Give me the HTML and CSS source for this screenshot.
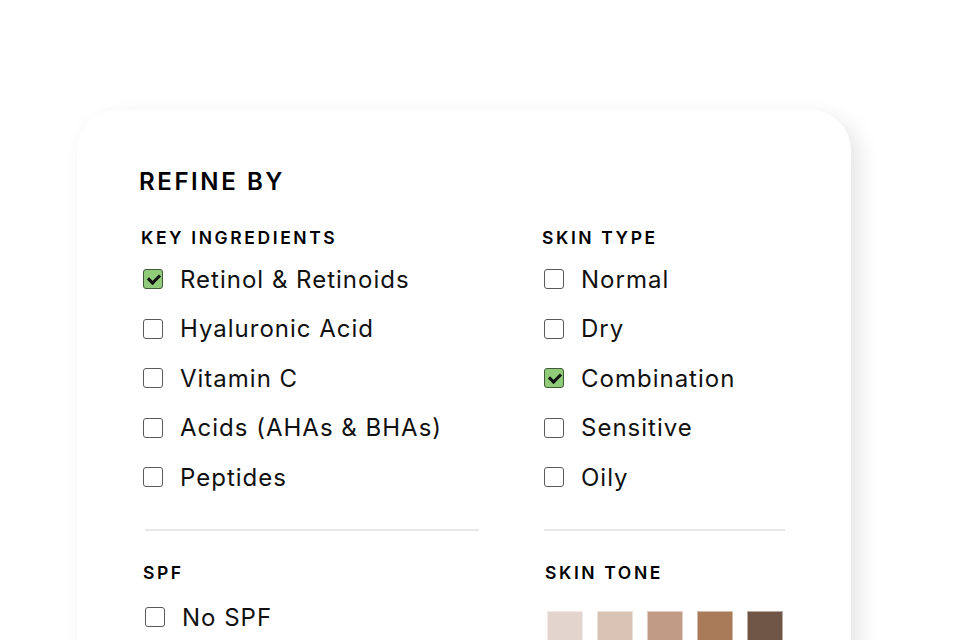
FILE: index.html
```html
<!DOCTYPE html>
<html>
    <head>
        <meta charset="utf-8">
        <title>Refine by</title>
        <link rel="stylesheet" href="styles.css">
    </head>
    <body>
        <div class="page">
            <div class="card">
                <h2 class="title">REFINE BY</h2>
                <div class="grid">
                    <div class="group">
                        <h4 class="group-title">KEY INGREDIENTS</h4>
                        <label class="option"><span class="box checked"></span>Retinol &amp; Retinoids</label>
                        <label class="option"><span class="box"></span>Hyaluronic Acid</label>
                        <label class="option"><span class="box"></span>Vitamin C</label>
                        <label class="option"><span class="box"></span>Acids (AHAs &amp; BHAs)</label>
                        <label class="option"><span class="box"></span>Peptides</label>
                    </div>
                    <div class="group">
                        <h4 class="group-title">SKIN TYPE</h4>
                        <label class="option"><span class="box"></span>Normal</label>
                        <label class="option"><span class="box"></span>Dry</label>
                        <label class="option"><span class="box checked"></span>Combination</label>
                        <label class="option"><span class="box"></span>Sensitive</label>
                        <label class="option"><span class="box"></span>Oily</label>
                    </div>
                    <hr class="line line-left">
                    <hr class="line line-right">
                    <div class="group group-low group-spf">
                        <h4 class="group-title">SPF</h4>
                        <label class="option"><span class="box"></span>No SPF</label>
                    </div>
                    <div class="group group-low group-tone">
                        <h4 class="group-title">SKIN TONE</h4>
                        <div class="tones">
                            <span class="tone tone-1"></span>
                            <span class="tone tone-2"></span>
                            <span class="tone tone-3"></span>
                            <span class="tone tone-4"></span>
                            <span class="tone tone-5"></span>
                        </div>
                    </div>
                </div>
            </div>
        </div>
    </body>
</html>
```

FILE: styles.css
```css
html,body{
    margin: 0; padding: 0;
    background: #fff;
}
body{
    font-family: Inter, "Noto Sans", sans-serif;
    color: #111;
    overflow: hidden;
}
h2,h4,hr{
    margin: 0; padding: 0;
}
.page{
    padding: 110px 0 0 77px;
}
.card{
    width: 774px;
    height: 640px;
    box-sizing: border-box;
    padding: 58px 0 0 64px;
    background: #fff;
    border-radius: 40px;
    box-shadow: 8px 8px 22px rgba(0, 0, 0, 0.11);
}
.title{
    font-size: 24px;
    font-weight: 600;
    letter-spacing: 2.6px;
    line-height: 28px;
    margin: 0 0 31px -2px;
    color: #000;
}
.grid{
    display: grid;
    grid-template-columns: 338px 243px;
    column-gap: 63px;
}
.group-title{
    font-size: 17.5px;
    font-weight: 600;
    letter-spacing: 2.6px;
    line-height: 22px;
    margin-bottom: 5.5px;
    color: #000;
}
.option{
    display: flex;
    align-items: center;
    height: 49.5px;
    font-size: 24px;
    letter-spacing: 1px;
    gap: 17px;
    padding-left: 2px;
}
.box{
    width: 20px;
    height: 20px;
    border: 1px solid #5a5a5a;
    border-radius: 3px;
    box-sizing: border-box;
    flex: none;
    position: relative;
}
.box.checked{
    background: #8fcb78;
    border-color: #3f5a35;
}
.box.checked:after{
    content: '';
    position: absolute;
    left: 5.5px;
    top: 2px;
    width: 5px;
    height: 9px;
    border: solid #111;
    border-width: 0 3px 3px 0;
    transform: rotate(45deg);
}
.line{
    border: none;
    border-top: 2px solid #e8e8e8;
    margin-top: 27px;
}
.line-left{
    width: 334px;
    margin-left: 4px;
}
.line-right{
    width: 241px;
    margin-left: 2px;
}
.group-low{
    padding-top: 31px;
}
.group-spf{
    padding-left: 2px;
}
.group-spf .group-title{
    margin-bottom: 8.5px;
}
.group-tone{
    padding-left: 3px;
}
.tones{
    display: flex;
    gap: 14px;
    padding: 21px 0 0 2px;
}
.tone{
    width: 36px;
    height: 40px;
    box-sizing: border-box;
    border: 1px solid rgba(255, 255, 255, 0.5);
}
.tone-1{ background: #e3d5cd; }
.tone-2{ background: #d8c3b4; }
.tone-3{ background: #c29b86; }
.tone-4{ background: #a87a58; }
.tone-5{ background: #705646; }
```
